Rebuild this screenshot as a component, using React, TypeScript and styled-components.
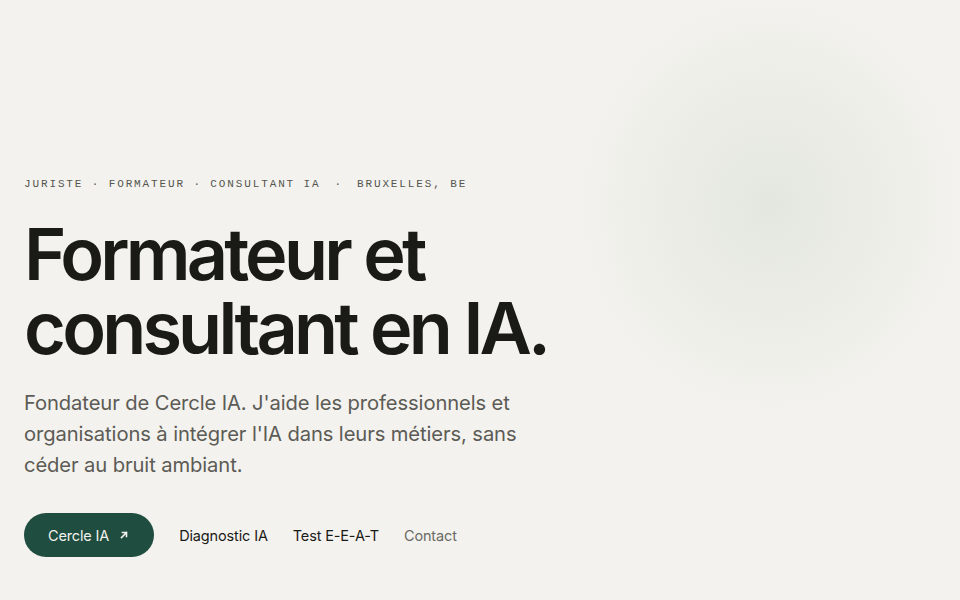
import React from "react";
import styled, { createGlobalStyle } from "styled-components";

const Global = createGlobalStyle`
  html, body { margin: 0; padding: 0; }
  body { background: #f3f2ee; }
  * { box-sizing: border-box; }
`;

const Page = styled.main`
  position: relative;
  width: 960px;
  height: 600px;
  overflow: hidden;
  background:
    radial-gradient(ellipse 190px 205px at 770px 205px, rgba(227,230,223,0.95) 0%, rgba(232,234,227,0.75) 50%, rgba(243,242,238,0) 100%),
    #f3f2ee;
  padding: 177px 24px 0 24px;
  display: flex;
  flex-direction: column;
`;

const Eyebrow = styled.div`
  display: flex;
  align-items: center;
  gap: 14px;
  font-family: "Liberation Mono", "DejaVu Sans Mono", monospace;
  font-size: 11px;
  letter-spacing: 0.17em;
  color: #55554f;
  text-transform: uppercase;
  line-height: 14px;
`;

const Title = styled.h1`
  margin: 26px 0 0 0;
  font-family: Inter, "Noto Sans", sans-serif;
  font-weight: 580;
  font-size: 72px;
  line-height: 74px;
  letter-spacing: -0.053em;
  color: #1a1a17;
`;

const Lead = styled.p`
  margin: 22px 0 0 0;
  width: 530px;
  font-family: Inter, "Noto Sans", sans-serif;
  font-size: 20.2px;
  line-height: 31px;
  color: #5c5b55;
  letter-spacing: -0.005em;
`;

const Actions = styled.nav`
  margin-top: 33px;
  display: flex;
  align-items: center;
  gap: 25px;
`;

const Primary = styled.a`
  display: inline-flex;
  align-items: center;
  gap: 10px;
  height: 44px;
  padding: 0 25px 0 24px;
  border-radius: 22px;
  background: #1f4d3f;
  color: #f3f2ee;
  font-family: Inter, "Noto Sans", sans-serif;
  font-size: 14.5px;
  text-decoration: none;
  letter-spacing: -0.01em;
`;

const NavLink = styled.a<{ $muted?: boolean }>`
  font-family: Inter, "Noto Sans", sans-serif;
  font-size: 14.5px;
  color: ${(p) => (p.$muted ? "#6a6a64" : "#1a1a17")};
  text-decoration: none;
  letter-spacing: -0.01em;
`;

const Arrow = () => (
  <svg width="10" height="10" viewBox="0 0 10 10" fill="none" stroke="currentColor" strokeWidth="1.6" strokeLinecap="square">
    <path d="M2.5 7.5 L7.5 2.5 M3.5 2.5 H7.5 V6.5" />
  </svg>
);

export default function App() {
  return (
    <>
      <Global />
      <Page>
        <Eyebrow>
          <span>Juriste · Formateur · Consultant IA</span>
          <span>·</span>
          <span>Bruxelles, BE</span>
        </Eyebrow>
        <Title>
          Formateur et
          <br />
          consultant en IA.
        </Title>
        <Lead>
          Fondateur de Cercle IA. J'aide les professionnels et organisations à intégrer l'IA dans leurs métiers, sans céder au bruit ambiant.
        </Lead>
        <Actions>
          <Primary href="#">
            Cercle IA <Arrow />
          </Primary>
          <NavLink href="#">Diagnostic IA</NavLink>
          <NavLink href="#">Test E-E-A-T</NavLink>
          <NavLink href="#" $muted>Contact</NavLink>
        </Actions>
      </Page>
    </>
  );
}
